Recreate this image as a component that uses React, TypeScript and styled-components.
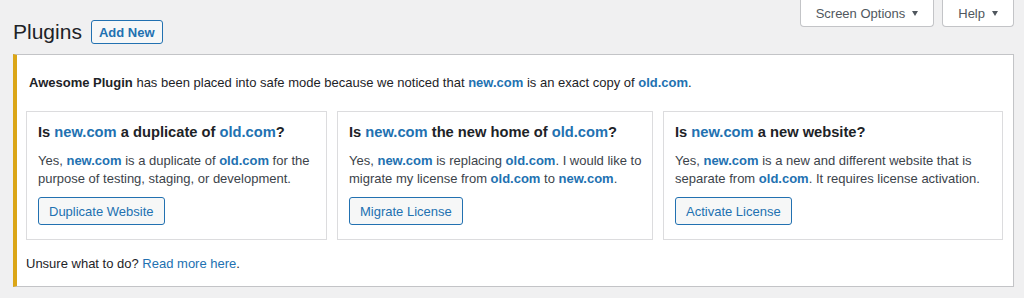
import React from 'react';
import styled, { createGlobalStyle } from 'styled-components';

const GlobalStyle = createGlobalStyle`
  html, body {
    margin: 0;
    padding: 0;
    background: #f0f0f1;
    font-family: "Liberation Sans", Arial, sans-serif;
    font-size: 13px;
    color: #3c434a;
  }
`;

type Choice = {
  id: string;
  title: React.ReactNode;
  text: React.ReactNode;
  action: string;
};

const choices: Choice[] = [
  {
    id: 'duplicate',
    title: <>Is <Site>new.com</Site> a duplicate of <Site>old.com</Site>?</>,
    text: (
      <>
        Yes, <Site>new.com</Site> is a duplicate of <Site>old.com</Site> for the<br />
        purpose of testing, staging, or development.
      </>
    ),
    action: 'Duplicate Website',
  },
  {
    id: 'migrate',
    title: <>Is <Site>new.com</Site> the new home of <Site>old.com</Site>?</>,
    text: (
      <>
        Yes, <Site>new.com</Site> is replacing <Site>old.com</Site>. I would like to<br />
        migrate my license from <Site>old.com</Site> to <Site>new.com</Site>.
      </>
    ),
    action: 'Migrate License',
  },
  {
    id: 'new',
    title: <>Is <Site>new.com</Site> a new website?</>,
    text: (
      <>
        Yes, <Site>new.com</Site> is a new and different website that is<br />
        separate from <Site>old.com</Site>. It requires license activation.
      </>
    ),
    action: 'Activate License',
  },
];

function Site({ children }: { children: React.ReactNode }) {
  return <SiteName>{children}</SiteName>;
}

const App = () => {
  return (
    <Page>
      <GlobalStyle />
      <Header>
        <TitleGroup>
          <Title>Plugins</Title>
          <AddNew>Add New</AddNew>
        </TitleGroup>
        <ScreenMeta>
          <MetaTab>Screen Options <Caret /></MetaTab>
          <MetaTab>Help <Caret /></MetaTab>
        </ScreenMeta>
      </Header>

      <Notice>
        <Intro>
          <strong>Awesome Plugin</strong> has been placed into safe mode because we noticed that{' '}
          <Site>new.com</Site> is an exact copy of <Site>old.com</Site>.
        </Intro>
        <Cards>
          {choices.map((c) => (
            <Card key={c.id}>
              <CardTitle>{c.title}</CardTitle>
              <CardText>{c.text}</CardText>
              <ActionBtn>{c.action}</ActionBtn>
            </Card>
          ))}
        </Cards>
        <Footer>
          Unsure what to do? <Link href="#">Read more here</Link>.
        </Footer>
      </Notice>
    </Page>
  );
};

export default App;

const Page = styled.div`
  padding: 0 10px 0 13px;
`;

const Header = styled.div`
  display: flex;
  justify-content: space-between;
  align-items: flex-start;
`;

const TitleGroup = styled.div`
  display: flex;
  align-items: center;
  gap: 9px;
  padding-top: 20px;
`;

const Title = styled.h1`
  margin: 0;
  font-size: 21px;
  font-weight: 400;
  line-height: 24px;
  color: #1d2327;
`;

const AddNew = styled.button`
  box-sizing: border-box;
  height: 24px;
  padding: 0 7px;
  font-family: inherit;
  font-size: 13px;
  font-weight: 700;
  color: #2271b1;
  background: #f6f7f7;
  border: 1px solid #2271b1;
  border-radius: 3px;
  cursor: pointer;
`;

const ScreenMeta = styled.div`
  display: flex;
  gap: 8px;
`;

const MetaTab = styled.button`
  box-sizing: border-box;
  display: flex;
  align-items: center;
  gap: 7px;
  height: 27px;
  padding: 0 15px 0 15px;
  font-family: inherit;
  font-size: 13px;
  color: #50575e;
  background: #fff;
  border: 1px solid #c3c4c7;
  border-top: none;
  border-radius: 0 0 4px 4px;
  cursor: pointer;
`;

const Caret = styled.span`
  width: 0;
  height: 0;
  border-left: 3.5px solid transparent;
  border-right: 3.5px solid transparent;
  border-top: 5px solid #50575e;
`;

const Notice = styled.div`
  margin-top: 10px;
  padding: 19px 10px 13px 9px;
  background: #fff;
  border: 1px solid #c3c4c7;
  border-left: 4px solid #dba617;
  box-shadow: 0 1px 1px rgba(0, 0, 0, 0.04);
`;

const Intro = styled.p`
  margin: 0 0 19px 3px;
  line-height: 18px;
  color: #1d2327;

  strong {
    font-weight: 700;
  }
`;

const SiteName = styled.span`
  font-weight: 700;
  color: #2271b1;
`;

const Cards = styled.div`
  display: grid;
  grid-template-columns: 301px 316px 1fr;
  gap: 10px;
`;

const Card = styled.div`
  padding: 10px 12px 14px 11px;
  border: 1px solid #dcdcde;
  background: #fff;
`;

const CardTitle = styled.h3`
  margin: 0;
  font-size: 14.7px;
  font-weight: 700;
  line-height: 20px;
  color: #1d2327;
`;

const CardText = styled.p`
  margin: 10px 0 9px;
  line-height: 18px;
  color: #3c434a;
  white-space: nowrap;
`;

const ActionBtn = styled.button`
  box-sizing: border-box;
  height: 28px;
  padding: 0 10px;
  font-family: inherit;
  font-size: 13px;
  color: #2271b1;
  background: #f6f7f7;
  border: 1px solid #2271b1;
  border-radius: 3px;
  cursor: pointer;
`;

const Footer = styled.p`
  margin: 15px 0 0;
  line-height: 18px;
  color: #1d2327;
`;

const Link = styled.a`
  color: #2271b1;
  text-decoration: none;
`;
